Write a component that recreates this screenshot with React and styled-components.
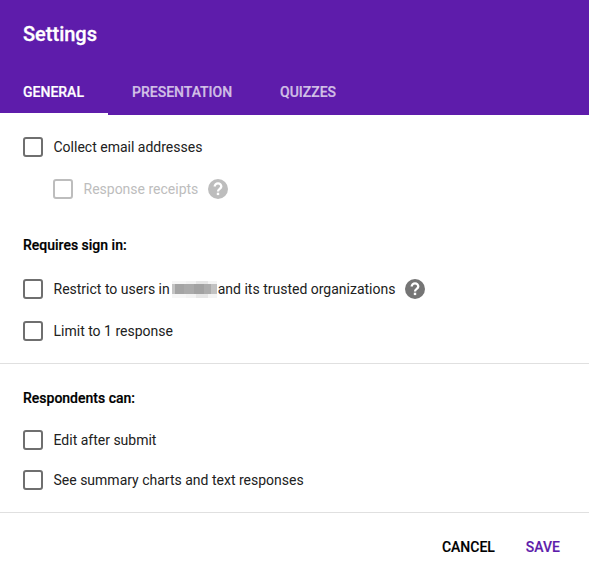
import React from 'react';
import styled, { createGlobalStyle } from 'styled-components';

const Global = createGlobalStyle`
  html, body { margin: 0; padding: 0; background: #fff; }
  body { font-family: Roboto, "Liberation Sans", sans-serif; }
`;

const Dialog = styled.div`
  width: 589px;
  height: 581px;
  display: flex;
  flex-direction: column;
  overflow: hidden;
`;
const Header = styled.header`
  height: 115px;
  flex: none;
  background: #5e1cab;
  display: flex;
  flex-direction: column;
  justify-content: space-between;
`;
const Title = styled.h1`
  margin: 0;
  padding: 22px 0 0 23px;
  font-size: 20px;
  line-height: 24px;
  font-weight: 500;
  -webkit-text-stroke: 0.3px #fff;
  color: #fff;
`;
const Tabs = styled.nav`
  display: flex;
  height: 49px;
`;
const Tab = styled.div`
  box-sizing: border-box;
  width: ${p => p.$width}px;
  padding-left: ${p => p.$pad}px;
  height: 49px;
  line-height: 52px;
  font-size: 14px;
  font-weight: 500;
  -webkit-text-stroke: 0.2px currentColor;
  white-space: nowrap;
  color: ${p => (p.$active ? '#fff' : 'rgba(255,255,255,0.7)')};
  border-bottom: 2px solid ${p => (p.$active ? '#fff' : 'transparent')};
`;
const Section = styled.section`
  height: ${p => p.$height}px;
  flex: none;
  box-sizing: border-box;
  padding: ${p => p.$top}px 0 0 23px;
  border-bottom: ${p => (p.$divider ? '1px solid #e0e0e0' : 'none')};
`;
const Row = styled.div`
  display: flex;
  align-items: center;
  height: 20px;
  margin-top: ${p => p.$gap || 0}px;
  margin-left: ${p => (p.$nested ? 30 : 0)}px;
  font-size: 14px;
  color: ${p => (p.$disabled ? '#bdbdbd' : '#212121')};
`;
const Box = styled.span`
  box-sizing: border-box;
  flex: none;
  width: 20px;
  height: 20px;
  border: 2px solid ${p => (p.$disabled ? '#bdbdbd' : '#6f6f6f')};
  border-radius: 3px;
  margin-right: 10.5px;
`;
const Heading = styled.h2`
  margin: ${p => p.$top}px 0 0;
  font-size: 14px;
  line-height: 20px;
  font-weight: 500;
  -webkit-text-stroke: 0.2px #000;
  color: #000;
`;
const Blur = styled.span`
  display: inline-block;
  flex: none;
  width: 45px;
  height: 17px;
  margin: 0 1px 0 2px;
  background:
    linear-gradient(90deg, #c4c4c4 0 3px, #a4a4a4 3px 12px, #aaaaaa 12px 22px, #a2a2a2 22px 32px, #acacac 32px 39px, #c2c2c2 39px 45px) 0 3px / 100% 10px no-repeat,
    linear-gradient(90deg, #f6f6f6 0 14px, #f2f2f2 14px 24px, #e6e6e6 24px 36px, #f4f4f4 36px);
`;
const Help = styled.svg`
  flex: none;
  width: 20px;
  height: 20px;
  margin-left: ${p => p.$gap}px;
`;
const Footer = styled.footer`
  display: flex;
  justify-content: flex-end;
  gap: 31px;
  padding: 26px 29px 0 0;
`;
const Action = styled.span`
  font-size: 14px;
  line-height: 17px;
  font-weight: 500;
  -webkit-text-stroke: 0.15px currentColor;
  color: ${p => (p.$primary ? '#5e1cab' : '#000')};
`;

const HelpIcon = ({ color, gap }) => (
  <Help $gap={gap} viewBox="0 0 20 20" aria-hidden="true">
    <circle cx="10" cy="10" r="10" fill={color} />
    <path d="M6.7 7.6a3.3 3.3 0 0 1 6.6 0c0 2.2-3.3 2.4-3.3 4.8" fill="none" stroke="#fff" strokeWidth="2.3" />
    <rect x="8.8" y="13.7" width="2.4" height="2.4" fill="#fff" />
  </Help>
);

export default function App() {
  return (
    <Dialog>
      <Global />
      <Header>
        <Title>Settings</Title>
        <Tabs>
          <Tab $active $width={108} $pad={23}>GENERAL</Tab>
          <Tab $width={172} $pad={24}>PRESENTATION</Tab>
          <Tab $width={100} $pad={0}>QUIZZES</Tab>
        </Tabs>
      </Header>
      <Section $height={249} $divider $top={22}>
        <Row><Box />Collect email addresses</Row>
        <Row $nested $disabled $gap={22}>
          <Box $disabled />Response receipts<HelpIcon color="#bdbdbd" gap={10} />
        </Row>
        <Heading $top={36}>Requires sign in:</Heading>
        <Row $gap={24}>
          <Box />Restrict to users in<Blur />and its trusted organizations<HelpIcon color="#757575" gap={10} />
        </Row>
        <Row $gap={22}><Box />Limit to 1 response</Row>
      </Section>
      <Section $height={149} $divider $top={24}>
        <Heading $top={0}>Respondents can:</Heading>
        <Row $gap={22}><Box />Edit after submit</Row>
        <Row $gap={20}><Box />See summary charts and text responses</Row>
      </Section>
      <Footer>
        <Action>CANCEL</Action>
        <Action $primary>SAVE</Action>
      </Footer>
    </Dialog>
  );
}
